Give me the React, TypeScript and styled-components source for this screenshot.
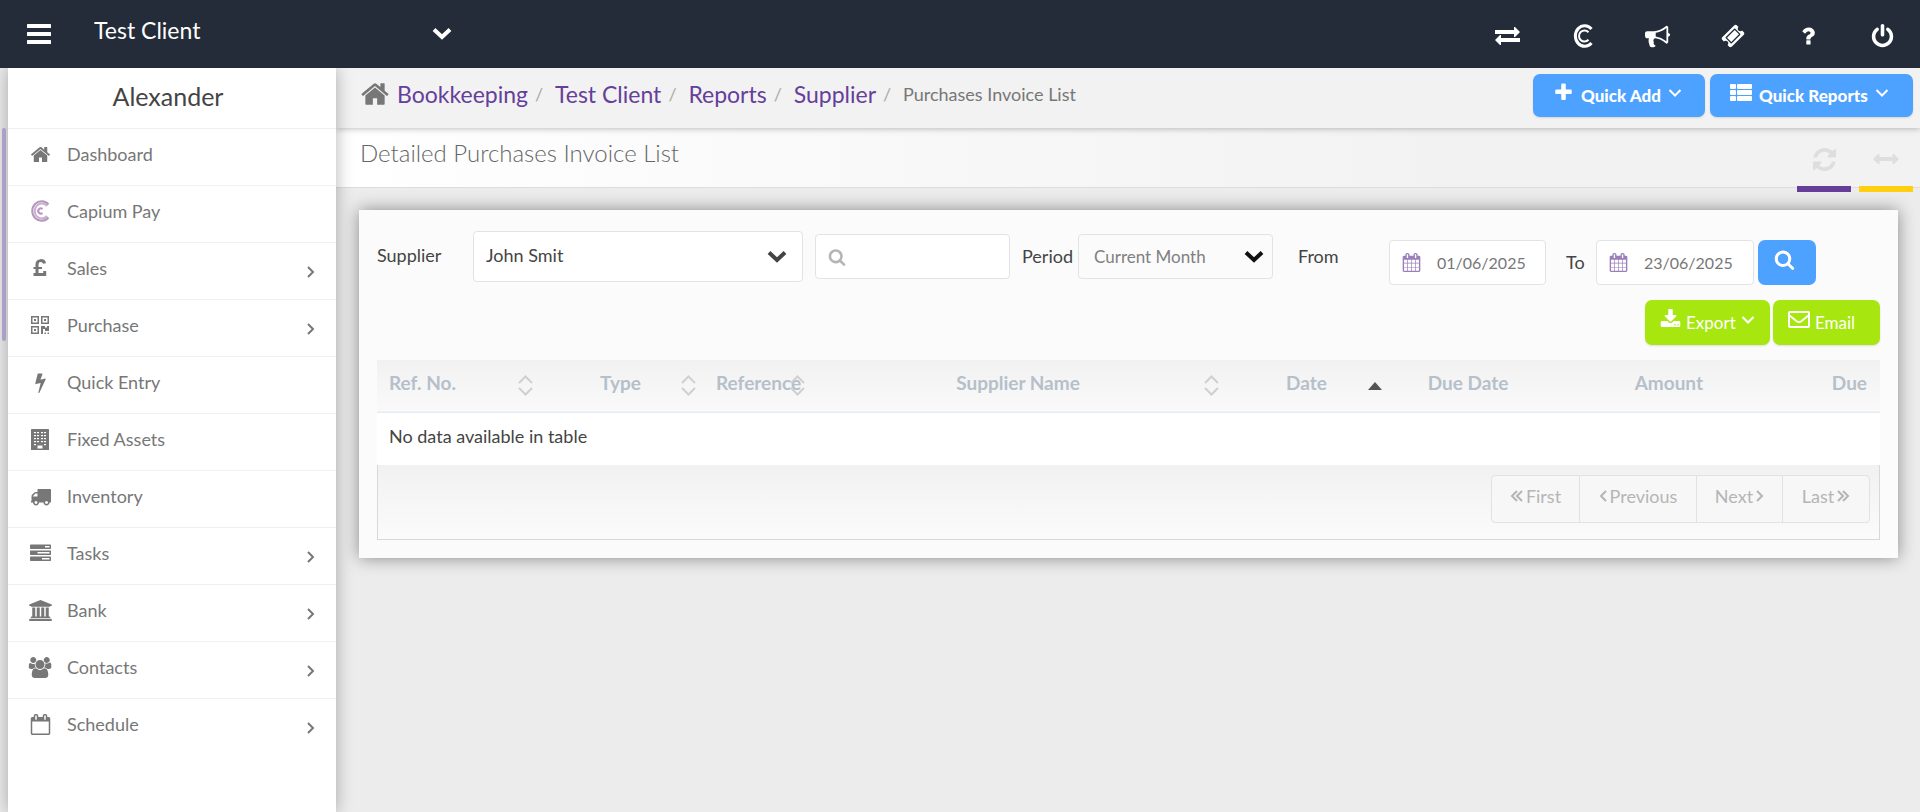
import React from "react";
import styled, { createGlobalStyle } from "styled-components";

const GlobalStyle = createGlobalStyle`
  *, *::before, *::after { box-sizing: border-box; }
  body {
    margin: 0;
    background: #ececec;
    color: #444;
    font-family: Lato, "Open Sans", sans-serif;
    font-size: 18px;
    line-height: 24px;
  }
  button, input, select { font: inherit; color: inherit; margin: 0; }
  button { border: 0; background: none; padding: 0; cursor: pointer; }
  a { text-decoration: none; color: inherit; }
  svg { display: block; flex: none; }
`;

/* ---------- icons ---------- */

const paths = {
  search:
    "M1216 832q0-185-131.5-316.5t-316.5-131.5-316.5 131.5-131.5 316.5 131.5 316.5 316.5 131.5 316.5-131.5 131.5-316.5zm512 832q0 52-38 90t-90 38q-54 0-90-38l-343-342q-179 124-399 124-143 0-273.5-55.5t-225-150-150-225-55.5-273.5 55.5-273.5 150-225 225-150 273.5-55.5 273.5 55.5 225 150 150 225 55.5 273.5q0 220-124 399l343 343q37 37 37 90z",
  home:
    "M1472 992v480q0 26-19 45t-45 19h-384v-384h-256v384h-384q-26 0-45-19t-19-45v-480q0-1 .5-3t.5-3l575-474 575 474q1 2 1 6zm223-69l-62 74q-8 9-21 11h-3q-13 0-21-7l-692-577-692 577q-12 8-24 7-13-2-21-11l-62-74q-8-10-7-23.5t11-21.5l719-599q32-26 76-26t76 26l244 204v-195q0-14 9-23t23-9h192q14 0 23 9t9 23v408l219 182q10 8 11 21.5t-7 23.5z",
  power:
    "M1664 896q0 156-61 298t-164 245-245 164-298 61-298-61-245-164-164-245-61-298q0-182 80.5-343t226.5-270q43-32 95.5-25t83.5 50q32 42 24.5 94.5t-49.5 84.5q-98 74-151.5 181t-53.5 228q0 104 40.5 198.5t109.5 163.5 163.5 109.5 198.5 40.5 198.5-40.5 163.5-109.5 109.5-163.5 40.5-198.5q0-121-53.5-228t-151.5-181q-42-32-49.5-84.5t24.5-94.5q31-43 84-50t95 25q146 109 226.5 270t80.5 343zm-640-768v640q0 52-38 90t-90 38-90-38-38-90v-640q0-52 38-90t90-38 90 38 38 90z",
  download:
    "M1344 1344q0-26-19-45t-45-19-45 19-19 45 19 45 45 19 45-19 19-45zm256 0q0-26-19-45t-45-19-45 19-19 45 19 45 45 19 45-19 19-45zm128-224v320q0 40-28 68t-68 28h-1472q-40 0-68-28t-28-68v-320q0-40 28-68t68-28h465l135 136q58 56 136 56t136-56l136-136h464q40 0 68 28t28 68zm-325-569q17 41-14 70l-448 448q-18 19-45 19t-45-19l-448-448q-31-29-14-70 17-39 59-39h256v-448q0-26 19-45t45-19h256q26 0 45 19t19 45v448h256q42 0 59 39z",
  plus:
    "M1600 736v192q0 40-28 68t-68 28h-416v416q0 40-28 68t-68 28h-192q-40 0-68-28t-28-68v-416h-416q-40 0-68-28t-28-68v-192q0-40 28-68t68-28h416v-416q0-40 28-68t68-28h192q40 0 68 28t28 68v416h416q40 0 68 28t28 68z",
  refresh:
    "M1639 1056q0 5-1 7-64 268-268 434.5t-478 166.5q-146 0-282.5-55t-243.5-157l-129 129q-19 19-45 19t-45-19-19-45v-448q0-26 19-45t45-19h448q26 0 45 19t19 45-19 45l-137 137q71 66 161 102t187 36q134 0 250-65t186-179q11-17 53-117 8-23 30-23h192q13 0 22.5 9.5t9.5 22.5zm25-800v448q0 26-19 45t-45 19h-448q-26 0-45-19t-19-45 19-45l138-138q-148-137-349-137-134 0-250 65t-186 179q-11 17-53 117-8 23-30 23h-199q-13 0-22.5-9.5t-9.5-22.5v-7q65-268 270-434.5t480-166.5q146 0 284 55.5t245 156.5l130-129q19-19 45-19t45 19 19 45z",
  ticket:
    "M1024 452l316 316-572 572-316-316zm-211 979l618-618q19-19 19-45t-19-45l-362-362q-18-18-45-18t-45 18l-618 618q-19 19-19 45t19 45l362 362q18 18 45 18t45-18zm889-637l-907 908q-37 37-90.5 37t-90.5-37l-126-126q56-56 56-136t-56-136-136-56-136 56l-125-126q-37-37-37-90.5t37-90.5l907-906q37-37 90.5-37t90.5 37l125 125q-56 56-56 136t56 136 136 56 136-56l126 125q37 37 37 90.5t-37 90.5z",
  bullhorn:
    "M1664 640q53 0 90.5 37.5t37.5 90.5-37.5 90.5-90.5 37.5v384q0 52-38 90t-90 38q-417-347-812-380-58 19-91 66t-31 100.5 40 92.5q-20 33-23 65.5t6 58 33.5 55 48 50 61.5 50.5q-29 58-111.5 83t-168.5 11.5-132-55.5q-7-23-29.5-87.5t-32-94.5-23-89-15-101 3.5-98.5 22-110.5h-122q-66 0-113-47t-47-113v-192q0-66 47-113t113-47h480q435 0 896-384 52 0 90 38t38 90v384zm-128 604v-954q-394 302-768 343v270q377 42 768 341z",
  question:
    "M1088 1256v240q0 16-12 28t-28 12h-240q-16 0-28-12t-12-28v-240q0-16 12-28t28-12h240q16 0 28 12t12 28zm316-600q0 54-15.5 101t-35 76.5-55 59.5-57.5 43.5-61 35.5q-41 23-68.5 65t-27.5 67q0 17-12 32.5t-28 15.5h-240q-15 0-25.5-18.5t-10.5-37.5v-45q0-83 65-156.5t143-108.5q59-27 84-56t25-76q0-42-46.5-74t-107.5-32q-65 0-108 29-35 25-107 115-13 16-31 16-12 0-25-8l-164-125q-13-10-15.5-25t5.5-28q160-266 464-266 80 0 161 31t146 83 106 127.5 41 158.5z",
  bolt:
    "M1333 566q18 20 7 44l-540 1157q-13 25-42 25-4 0-14-2-17-5-25.5-19t-4.5-30l197-808-406 101q-4 1-12 1-18 0-31-11-18-15-13-39l201-825q4-14 16-23t28-9h328q19 0 32 12.5t13 29.5q0 8-5 18l-171 463 396-98q8-2 12-2 19 0 34 15z",
  calendar:
    "M192 1664h288v-288h-288v288zm352 0h320v-288h-320v288zm-352-352h288v-320h-288v320zm352 0h320v-320h-320v320zm-352-384h288v-288h-288v288zm736 736h320v-288h-320v288zm-384-736h320v-288h-320v288zm768 736h288v-288h-288v288zm-384-352h320v-320h-320v320zm-352-864v-288q0-13-9.5-22.5t-22.5-9.5h-64q-13 0-22.5 9.5t-9.5 22.5v288q0 13 9.5 22.5t22.5 9.5h64q13 0 22.5-9.5t9.5-22.5zm736 864h288v-320h-288v320zm-384-384h320v-288h-320v288zm384 0h288v-288h-288v288zm32-480v-288q0-13-9.5-22.5t-22.5-9.5h-64q-13 0-22.5 9.5t-9.5 22.5v288q0 13 9.5 22.5t22.5 9.5h64q13 0 22.5-9.5t9.5-22.5zm384-64v1280q0 52-38 90t-90 38h-1408q-52 0-90-38t-38-90v-1280q0-52 38-90t90-38h128v-96q0-66 47-113t113-47h64q66 0 113 47t47 113v96h384v-96q0-66 47-113t113-47h64q66 0 113 47t47 113v96h128q52 0 90 38t38 90z",
  calendarEmpty:
    "M192 1664h1408v-1024h-1408v1024zm384-1216v-288q0-14-9-23t-23-9h-64q-14 0-23 9t-9 23v288q0 14 9 23t23 9h64q14 0 23-9t9-23zm768 0v-288q0-14-9-23t-23-9h-64q-14 0-23 9t-9 23v288q0 14 9 23t23 9h64q14 0 23-9t9-23zm384-64v1280q0 52-38 90t-90 38h-1408q-52 0-90-38t-38-90v-1280q0-52 38-90t90-38h128v-96q0-66 47-113t113-47h64q66 0 113 47t47 113v96h384v-96q0-66 47-113t113-47h64q66 0 113 47t47 113v96h128q52 0 90 38t38 90z",
  truck:
    "M640 1408q0-52-38-90t-90-38-90 38-38 90 38 90 90 38 90-38 38-90zm-384-512h384v-256h-158q-13 0-22 9l-195 195q-9 9-9 22v30zm1280 512q0-52-38-90t-90-38-90 38-38 90 38 90 90 38 90-38 38-90zm256-1088v1024q0 15-4 26.5t-13.5 18.5-16.5 11.5-23.5 6-22.5 2-25.5 0-22.5-.5q0 106-75 181t-181 75-181-75-75-181h-384q0 106-75 181t-181 75-181-75-75-181h-64q-3 0-22.5.5t-25.5 0-22.5-2-23.5-6-16.5-11.5-13.5-18.5-4-26.5q0-26 19-45t45-19v-320q0-8-.5-35t0-38 2.5-34.5 6.5-37 14-30.5 22.5-30l198-198q19-19 50.5-32t58.5-13h160v-192q0-26 19-45t45-19h1024q26 0 45 19t19 45z",
  tasks:
    "M1024 1408h640v-128h-640v128zm-384-512h1024v-128h-1024v128zm640-512h384v-128h-384v128zm512 832v256q0 26-19 45t-45 19h-1664q-26 0-45-19t-19-45v-256q0-26 19-45t45-19h1664q26 0 45 19t19 45zm0-512v256q0 26-19 45t-45 19h-1664q-26 0-45-19t-19-45v-256q0-26 19-45t45-19h1664q26 0 45 19t19 45zm0-512v256q0 26-19 45t-45 19h-1664q-26 0-45-19t-19-45v-256q0-26 19-45t45-19h1664q26 0 45 19t19 45z",
  bank:
    "M960 0l960 384v128h-128q0 26-20.5 45t-48.5 19h-1526q-28 0-48.5-19t-20.5-45h-128v-128zm-704 640h256v768h128v-768h256v768h128v-768h256v768h128v-768h256v768h59q28 0 48.5 19t20.5 45v64h-1664v-64q0-26 20.5-45t48.5-19h59v-768zm1595 960q28 0 48.5 19t20.5 45v128h-1920v-128q0-26 20.5-45t48.5-19h1782z",
  users:
    "M657 896q-162 5-265 128h-134q-82 0-138-40.5t-56-118.5q0-353 124-353 6 0 43.5 21t97.5 42.5 119 21.5q67 0 133-23-5 37-5 66 0 159 93 294zm1071 637q0 120-73 189.5t-194 69.5h-874q-121 0-194-69.5t-73-189.5q0-53 3.5-103.5t14-109 26.5-108.5 43-97.5 62-81 85.5-53.5 111.5-20q10 0 43 21.5t73 48 107 48 135 21.5 135-21.5 107-48 73-48 43-21.5q61 0 111.5 20t85.5 53.5 62 81 43 97.5 26.5 108.5 14 109 3.5 103.5zm-1024-1277q0 106-75 181t-181 75-181-75-75-181 75-181 181-75 181 75 75 181zm704 384q0 159-112.5 271.5t-271.5 112.5-271.5-112.5-112.5-271.5 112.5-271.5 271.5-112.5 271.5 112.5 112.5 271.5zm576 225q0 78-56 118.5t-138 40.5h-134q-103-123-265-128 93-135 93-294 0-29-5-66 66 23 133 23 59 0 119-21.5t97.5-42.5 43.5-21q124 0 124 353zm-128-609q0 106-75 181t-181 75-181-75-75-181 75-181 181-75 181 75 75 181z",
};

type GlyphName = keyof typeof paths;

const Glyph = ({ name, size, wide = 1792 }: { name: GlyphName; size: number; wide?: number }) => (
  <svg
    width={Math.round((size * wide) / 1792)}
    height={size}
    viewBox={`0 0 ${wide} 1792`}
    fill="currentColor"
    aria-hidden="true"
  >
    <path d={paths[name]} />
  </svg>
);

const BarsIcon = () => (
  <svg width="24" height="20" viewBox="0 0 24 20" fill="currentColor" aria-hidden="true">
    <rect width="24" height="4" rx="0.5" />
    <rect y="8" width="24" height="4" rx="0.5" />
    <rect y="16" width="24" height="4" rx="0.5" />
  </svg>
);

const ThickChevron = ({ color }: { color: string }) => (
  <svg width="20" height="14" viewBox="0 0 20 14" fill="none" stroke={color} strokeWidth="4" aria-hidden="true">
    <path d="M2 2.500l8 7.500 8-7.500" />
  </svg>
);

const ThinChevron = ({ way }: { way: "down" | "right" | "left" }) =>
  way === "down" ? (
    <svg width="14" height="8" viewBox="0 0 14 8" fill="none" stroke="currentColor" strokeWidth="2" aria-hidden="true">
      <path d="M1.500 1l5.500 5.500L12.500 1" />
    </svg>
  ) : (
    <svg width="8" height="12" viewBox="0 0 8 12" fill="none" stroke="currentColor" strokeWidth="2" aria-hidden="true">
      <path d={way === "right" ? "M1 1l5 5-5 5" : "M7 1L2 6l5 5"} />
    </svg>
  );

const DoubleChevron = ({ way }: { way: "right" | "left" }) => (
  <svg width="13" height="12" viewBox="0 0 13 12" fill="none" stroke="currentColor" strokeWidth="2" aria-hidden="true">
    <path d={way === "right" ? "M1 1l5 5-5 5M6 1l5 5-5 5" : "M7 1L2 6l5 5M12 1L7 6l5 5"} />
  </svg>
);

const ExchangeIcon = () => (
  <svg width="25" height="18" viewBox="0 0 25 18" fill="currentColor" aria-hidden="true">
    <path d="M0 3h19V0h1l5 5-5 5h-1V7H0zM25 15H6v3H5l-5-5 5-5h1v3h19z" />
  </svg>
);

const ArrowsIcon = () => (
  <svg width="26" height="10" viewBox="0 0 26 10" fill="currentColor" aria-hidden="true">
    <path d="M0 5l5-5h1.500v3h13V0H21l5 5-5 5h-1.500V7h-13v3H5z" />
  </svg>
);

const CapiumIcon = () => (
  <svg width="22" height="24" viewBox="0 0 22 24" fill="none" stroke="currentColor" aria-hidden="true">
    <path d="M19.500 5A9.300 10.300 0 1 0 19.500 19" strokeWidth="3" />
    <path d="M16.500 8.200A5.500 5.500 0 1 0 16.500 15.800" strokeWidth="2" />
  </svg>
);

const CapiumPayIcon = () => (
  <svg width="20" height="22" viewBox="0 0 20 22" fill="none" stroke="#b795c0" aria-hidden="true">
    <path d="M18.500 4.500A9.300 9.800 0 1 0 18.500 17.500" strokeWidth="2" />
    <path d="M17 6A7 7.500 0 1 0 17 16" strokeWidth="2" opacity="0.750" />
    <path d="M12.500 9A2.600 2.600 0 1 0 12.500 13" strokeWidth="2" />
  </svg>
);

const PoundIcon = () => (
  <svg width="14" height="18" viewBox="0 0 14 18" fill="none" stroke="currentColor" aria-hidden="true">
    <path d="M11.500 4.500C11 .8 4 .2 4 5.500V15.500" strokeWidth="3" />
    <path d="M0.500 9H9" strokeWidth="2" />
    <path d="M0.500 15.500H11.700V12" strokeWidth="3" />
  </svg>
);

const QrIcon = () => (
  <svg width="18" height="18" viewBox="0 0 18 18" fill="currentColor" aria-hidden="true">
    <path
      fillRule="evenodd"
      d="M0 0h8v8H0zM1.500 1.500v5h5v-5zM10 0h8v8h-8zM11.500 1.500v5h5v-5zM0 10h8v8H0zM1.500 11.500v5h5v-5z"
    />
    <path d="M3 3h2v2H3zM13 3h2v2h-2zM3 13h2v2H3zM10 10h4v1.500h2V10h2v5h-4v-2h-2v5h-2zM13.500 16.500h1.500V18h-1.500zM16.500 16.500H18V18h-1.500z" />
  </svg>
);

const BuildingIcon = () => (
  <svg width="18" height="21" viewBox="0 0 18 21" aria-hidden="true">
    <rect width="18" height="21" rx="0.500" fill="currentColor" />
    {[3, 6, 9, 12].map((y) =>
      [3, 6, 10, 13].map((x) => <rect key={`${x}-${y}`} x={x} y={y} width="2" height="1.200" fill="#fff" />)
    )}
    {[3, 13].map((x) => (
      <rect key={x} x={x} y="15" width="2" height="1.200" fill="#fff" />
    ))}
    <rect x="6.500" y="16.500" width="5" height="3" fill="#fff" />
  </svg>
);

const ListIcon = () => (
  <svg width="22" height="17" viewBox="0 0 22 17" fill="currentColor" aria-hidden="true">
    {[0, 6, 12].map((y) => (
      <g key={y}>
        <rect y={y} width="6" height="5" rx="1" />
        <rect x="7" y={y} width="15" height="5" rx="1" />
      </g>
    ))}
  </svg>
);

const EnvelopeIcon = () => (
  <svg width="22" height="17" viewBox="0 0 22 17" fill="none" stroke="currentColor" strokeWidth="2" aria-hidden="true">
    <rect x="1" y="1" width="20" height="15" rx="1" />
    <path d="M1.500 4.500l7.500 6q2 1.300 4 0l7.500-6" />
  </svg>
);

const SortIcon = () => (
  <svg width="15" height="21" viewBox="0 0 15 21" fill="none" stroke="#d0d0d0" strokeWidth="2" aria-hidden="true">
    <path d="M1 8l6.500-6.500L14 8M1 13l6.500 6.500L14 13" />
  </svg>
);

const SortedIcon = () => (
  <svg width="14" height="8" viewBox="0 0 14 8" fill="#555" aria-hidden="true">
    <path d="M0 8l7-8 7 8z" />
  </svg>
);

/* ---------- top bar ---------- */

const TopBar = styled.header`
  position: relative;
  z-index: 2;
  display: flex;
  align-items: center;
  height: 68px;
  padding-left: 27px;
  background: #232c38;
  color: #fff;
`;

const MenuButton = styled.button`
  width: 24px;
`;

const ClientPicker = styled.div`
  position: relative;
  width: 380px;
  height: 52px;
  margin: 0 auto 8px 43px;
  select {
    width: 100%;
    height: 100%;
    padding: 0;
    border: 0;
    appearance: none;
    background: #232c38;
    font-size: 23px;
  }
  svg {
    position: absolute;
    top: 23px;
    right: 22px;
    pointer-events: none;
  }
`;

const TopAction = styled.button`
  display: flex;
  align-items: center;
  justify-content: center;
  width: 75px;
  height: 68px;
  padding-top: 4px;
`;

/* ---------- side menu ---------- */

const Shell = styled.div`
  display: flex;
  min-height: calc(100vh - 68px);
`;

const ScrollRail = styled.div`
  width: 8px;
  padding: 60px 2px 0;
  background: #ebebeb;
`;

const ScrollThumb = styled.div`
  position: relative;
  z-index: 2;
  height: 213px;
  border-radius: 2px;
  background: #ad9fc6;
`;

const SideMenu = styled.nav`
  position: relative;
  z-index: 1;
  width: 328px;
  flex: none;
  background: #fff;
  box-shadow: 0 0 16px rgba(0, 0, 0, 0.3);
`;

const UserName = styled.div`
  height: 60px;
  padding-right: 8px;
  line-height: 56px;
  font-size: 25px;
  text-align: center;
`;

const MenuList = styled.ul`
  margin: 0;
  padding: 0;
  list-style: none;
`;

const MenuLink = styled.a`
  display: flex;
  align-items: center;
  height: 57px;
  padding: 2px 21px 0 12px;
  border-top: 1px solid #f0f0f0;
  color: #777;
`;

const MenuIcon = styled.span`
  display: flex;
  justify-content: center;
  width: 40px;
  margin-right: 7px;
  padding-bottom: 8px;
`;

const MenuLabel = styled.span`
  flex: 1;
  padding-bottom: 8px;
`;

/* ---------- page heads ---------- */

const Main = styled.main`
  flex: 1;
  min-width: 0;
`;

const CrumbBar = styled.div`
  position: relative;
  display: flex;
  justify-content: space-between;
  height: 60px;
  padding: 6px 7px 0 24px;
  background: #f2f2f2;
  box-shadow: 0 1px 6px rgba(0, 0, 0, 0.25);
`;

const Crumbs = styled.ol`
  display: flex;
  align-items: center;
  height: 40px;
  margin: 0;
  padding: 0;
  list-style: none;
  color: #777;
  li { display: flex; align-items: center; }
  li + li::before {
    content: "/";
    width: 27px;
    padding-left: 7px;
    color: #aaa;
  }
`;

const CrumbLink = styled.a`
  font-size: 23px;
  color: #663e9b;
`;

const HomeMark = styled.span`
  margin-right: 7px;
  color: #777;
`;

const QuickActions = styled.div`
  display: flex;
  gap: 5px;
`;

const SolidButton = styled.button<{ $tone: "blue" | "green"; $width: number }>`
  display: flex;
  align-items: center;
  width: ${(p) => p.$width}px;
  height: ${(p) => (p.$tone === "blue" ? 43 : 45)}px;
  padding: 0 ${(p) => (p.$tone === "blue" ? 20 : 15)}px;
  gap: ${(p) => (p.$tone === "blue" ? 7 : 5)}px;
  border-radius: 7px;
  background: ${(p) => (p.$tone === "blue" ? "#4da1ff" : "#a7e70f")};
  box-shadow: 0 1px 2px rgba(0, 0, 0, 0.12);
  color: #fff;
  font-size: 17px;
  font-weight: ${(p) => (p.$tone === "blue" ? 900 : 400)};
  white-space: nowrap;
  svg { margin-bottom: 6px; }
`;

const TitleBar = styled.div`
  display: flex;
  justify-content: space-between;
  height: 60px;
  padding: 0 7px 0 24px;
  border-bottom: 1px solid #ddd;
  background: linear-gradient(90deg, #fff, #f2f2f2 70%);
`;

const PageTitle = styled.h1`
  margin: 0;
  font-size: 24px;
  font-weight: 300;
  line-height: 50px;
  color: #666;
`;

const PageTools = styled.div`
  display: flex;
  gap: 8px;
`;

const ToolButton = styled.button<{ $color: string }>`
  display: flex;
  align-items: center;
  justify-content: center;
  width: 54px;
  height: 64px;
  border-bottom: 6px solid ${(p) => p.$color};
  padding-bottom: 4px;
  padding-top: 8px;
  color: #dedede;
  margin-bottom: -6px;
`;

/* ---------- report card ---------- */

const Card = styled.section`
  margin: 22px 22px 24px 23px;
  padding: 21px 18px 18px;
  background: #fbfbfb;
  box-shadow: 0 0 16px rgba(0, 0, 0, 0.42);
`;

const Filters = styled.form`
  display: flex;
  align-items: flex-start;
  height: 54px;
`;

const Label = styled.label<{ $width: number; $drop: number }>`
  flex: none;
  width: ${(p) => p.$width}px;
  margin-top: ${(p) => p.$drop}px;
  line-height: ${(p) => (p.$drop ? 45 : 48)}px;
`;

const Field = styled.div<{ $width: number; $drop: number; $after: number }>`
  position: relative;
  flex: none;
  width: ${(p) => p.$width}px;
  height: ${(p) => (p.$drop ? 45 : 51)}px;
  margin-top: ${(p) => p.$drop}px;
  margin-right: ${(p) => p.$after}px;
`;

const FieldIcon = styled.span<{ $side: "left" | "right"; $inset?: number; $color?: string }>`
  position: absolute;
  top: 0;
  bottom: 0;
  ${(p) => p.$side}: ${(p) => p.$inset ?? 13}px;
  display: flex;
  align-items: center;
  color: ${(p) => p.$color ?? "inherit"};
  pointer-events: none;
`;

const control = `
  width: 100%;
  height: 100%;
  border: 1px solid #e3e3e3;
  border-radius: 4px;
  appearance: none;
  outline: 0;
`;

const Select = styled.select<{ $quiet?: boolean }>`
  ${control}
  padding: 0 40px ${(p) => (p.$quiet ? 0 : 4)}px ${(p) => (p.$quiet ? 15 : 12)}px;
  background: ${(p) => (p.$quiet ? "#fbfbfb" : "#fff")};
  color: ${(p) => (p.$quiet ? "#808080" : "#444")};
  font-size: ${(p) => (p.$quiet ? 17 : 18)}px;
`;

const Input = styled.input`
  ${control}
  padding: 0 8px 0 47px;
  background: #fff;
  color: #777;
  font-size: 16px;
`;

const SearchButton = styled.button`
  display: flex;
  align-items: center;
  justify-content: center;
  flex: none;
  width: 58px;
  height: 45px;
  margin-top: 9px;
  padding: 0 6px 6px 0;
  border-radius: 7px;
  background: #4da1ff;
  color: #fff;
`;

const Exports = styled.div`
  display: flex;
  justify-content: flex-end;
  gap: 3px;
  margin: 15px 0;
`;

const Table = styled.table`
  width: 100%;
  border-collapse: collapse;
  table-layout: fixed;
`;

const HeadCell = styled.th<{ $align: "left" | "center" | "right" }>`
  position: relative;
  height: 52px;
  padding: 0 ${(p) => (p.$align === "center" ? 18 : 13)}px 6px ${(p) => (p.$align === "center" ? 10 : 12)}px;
  text-align: ${(p) => p.$align};
  font-size: 19px;
  font-weight: 700;
  white-space: nowrap;
`;

const HeadRow = styled.tr`
  height: 52px;
  border-bottom: 1px solid #e4ecf5;
  background: linear-gradient(#f1f1f1, #fafafa);
  color: #b5c0ca;
`;

const SortMark = styled.span`
  position: absolute;
  top: 0;
  bottom: 0;
  right: 10px;
  display: flex;
  align-items: center;
`;

const EmptyCell = styled.td`
  height: 53px;
  padding: 0 12px 6px;
  background: #fff;
`;

const TableFoot = styled.div`
  display: flex;
  justify-content: flex-end;
  height: 75px;
  padding: 10px 9px 0;
  border: 1px solid #d8d8d8;
  border-top: 0;
  background: linear-gradient(#f1f1f1, #fbfbfb);
`;

const Pager = styled.div`
  display: flex;
  height: 48px;
  border: 1px solid #e2e2e2;
  border-radius: 4px;
  background: #f7f7f7;
`;

const PageButton = styled.button<{ $width: number }>`
  display: flex;
  align-items: center;
  justify-content: center;
  gap: 3px;
  width: ${(p) => p.$width}px;
  padding-bottom: 6px;
  color: #b5b5b5;
  & + & { border-left: 1px solid #e2e2e2; }
`;

/* ---------- data ---------- */

const menu: { label: string; icon: React.ReactNode; nested?: boolean }[] = [
  { label: "Dashboard", icon: <Glyph name="home" size={21} /> },
  { label: "Capium Pay", icon: <CapiumPayIcon /> },
  { label: "Sales", icon: <PoundIcon />, nested: true },
  { label: "Purchase", icon: <QrIcon />, nested: true },
  { label: "Quick Entry", icon: <Glyph name="bolt" size={21} /> },
  { label: "Fixed Assets", icon: <BuildingIcon /> },
  { label: "Inventory", icon: <Glyph name="truck" size={21} /> },
  { label: "Tasks", icon: <Glyph name="tasks" size={21} />, nested: true },
  { label: "Bank", icon: <Glyph name="bank" size={21} wide={1920} />, nested: true },
  { label: "Contacts", icon: <Glyph name="users" size={21} wide={2048} />, nested: true },
  { label: "Schedule", icon: <Glyph name="calendarEmpty" size={21} />, nested: true },
];

const topActions = [
  { label: "Switch", icon: <ExchangeIcon /> },
  { label: "Capium", icon: <CapiumIcon /> },
  { label: "News", icon: <Glyph name="bullhorn" size={25} /> },
  { label: "Tickets", icon: <Glyph name="ticket" size={24} /> },
  { label: "Help", icon: <Glyph name="question" size={24} /> },
  { label: "Log out", icon: <Glyph name="power" size={25} /> },
];

const columns: {
  label: string;
  width?: number;
  align: "left" | "center" | "right";
  sort?: "both" | "up";
}[] = [
  { label: "Ref. No.", width: 166, align: "left", sort: "both" },
  { label: "Type", width: 163, align: "center", sort: "both" },
  { label: "Reference", width: 109, align: "center", sort: "both" },
  { label: "Supplier Name", align: "center", sort: "both" },
  { label: "Date", width: 163, align: "center", sort: "up" },
  { label: "Due Date", width: 160, align: "center" },
  { label: "Amount", width: 164, align: "right" },
  { label: "Due", width: 164, align: "right" },
];

export default function App() {
  return (
    <>
      <GlobalStyle />
      <TopBar>
        <MenuButton aria-label="Menu">
          <BarsIcon />
        </MenuButton>
        <ClientPicker>
          <select aria-label="Client">
            <option>Test Client</option>
          </select>
          <ThickChevron color="#fff" />
        </ClientPicker>
        {topActions.map((a) => (
          <TopAction key={a.label} aria-label={a.label}>
            {a.icon}
          </TopAction>
        ))}
      </TopBar>
      <Shell>
        <ScrollRail>
          <ScrollThumb />
        </ScrollRail>
        <SideMenu>
          <UserName>Alexander</UserName>
          <MenuList>
            {menu.map((m) => (
              <li key={m.label}>
                <MenuLink href="#">
                  <MenuIcon>{m.icon}</MenuIcon>
                  <MenuLabel>{m.label}</MenuLabel>
                  {m.nested && <ThinChevron way="right" />}
                </MenuLink>
              </li>
            ))}
          </MenuList>
        </SideMenu>
        <Main>
          <CrumbBar>
            <Crumbs>
              <li>
                <HomeMark>
                  <Glyph name="home" size={30} />
                </HomeMark>
                <CrumbLink href="#">Bookkeeping</CrumbLink>
              </li>
              {["Test Client", "Reports", "Supplier"].map((c) => (
                <li key={c}>
                  <CrumbLink href="#">{c}</CrumbLink>
                </li>
              ))}
              <li>Purchases Invoice List</li>
            </Crumbs>
            <QuickActions>
              <SolidButton $tone="blue" $width={172}>
                <Glyph name="plus" size={21} />
                Quick Add
                <ThinChevron way="down" />
              </SolidButton>
              <SolidButton $tone="blue" $width={203}>
                <ListIcon />
                Quick Reports
                <ThinChevron way="down" />
              </SolidButton>
            </QuickActions>
          </CrumbBar>
          <TitleBar>
            <PageTitle>Detailed Purchases Invoice List</PageTitle>
            <PageTools>
              <ToolButton $color="#663e97" aria-label="Refresh">
                <Glyph name="refresh" size={27} />
              </ToolButton>
              <ToolButton $color="#ffcf10" aria-label="Full width">
                <ArrowsIcon />
              </ToolButton>
            </PageTools>
          </TitleBar>
          <Card>
            <Filters>
              <Label htmlFor="supplier" $width={96} $drop={0}>
                Supplier
              </Label>
              <Field $width={330} $drop={0} $after={12}>
                <Select id="supplier">
                  <option>John Smit</option>
                </Select>
                <FieldIcon $side="right" $inset={16}>
                  <ThickChevron color="#444" />
                </FieldIcon>
              </Field>
              <Field $width={195} $drop={3} $after={12}>
                <Input type="text" aria-label="Search" />
                <FieldIcon $side="left" $color="#b5b5b5">
                  <Glyph name="search" size={18} />
                </FieldIcon>
              </Field>
              <Label htmlFor="period" $width={56} $drop={3}>
                Period
              </Label>
              <Field $width={195} $drop={3} $after={25}>
                <Select id="period" $quiet>
                  <option>Current Month</option>
                </Select>
                <FieldIcon $side="right" $inset={9}>
                  <ThickChevron color="#111" />
                </FieldIcon>
              </Field>
              <Label htmlFor="from" $width={91} $drop={3}>
                From
              </Label>
              <Field $width={157} $drop={9} $after={20}>
                <Input id="from" type="text" defaultValue="01/06/2025" />
                <FieldIcon $side="left" $color="#9a7fba">
                  <Glyph name="calendar" size={19} />
                </FieldIcon>
              </Field>
              <Label htmlFor="to" $width={30} $drop={9}>
                To
              </Label>
              <Field $width={158} $drop={9} $after={4}>
                <Input id="to" type="text" defaultValue="23/06/2025" />
                <FieldIcon $side="left" $color="#9a7fba">
                  <Glyph name="calendar" size={19} />
                </FieldIcon>
              </Field>
              <SearchButton type="button" aria-label="Search">
                <Glyph name="search" size={21} />
              </SearchButton>
            </Filters>
            <Exports>
              <SolidButton $tone="green" $width={125}>
                <Glyph name="download" size={21} />
                Export
                <ThinChevron way="down" />
              </SolidButton>
              <SolidButton $tone="green" $width={107}>
                <EnvelopeIcon />
                Email
              </SolidButton>
            </Exports>
            <Table>
              <colgroup>
                {columns.map((c) => (
                  <col key={c.label} width={c.width} />
                ))}
              </colgroup>
              <thead>
                <HeadRow>
                  {columns.map((c) => (
                    <HeadCell key={c.label} $align={c.align}>
                      {c.label}
                      {c.sort && <SortMark>{c.sort === "up" ? <SortedIcon /> : <SortIcon />}</SortMark>}
                    </HeadCell>
                  ))}
                </HeadRow>
              </thead>
              <tbody>
                <tr>
                  <EmptyCell colSpan={8}>No data available in table</EmptyCell>
                </tr>
              </tbody>
            </Table>
            <TableFoot>
              <Pager>
                <PageButton $width={87}>
                  <DoubleChevron way="left" />
                  First
                </PageButton>
                <PageButton $width={117}>
                  <ThinChevron way="left" />
                  Previous
                </PageButton>
                <PageButton $width={86}>
                  Next
                  <ThinChevron way="right" />
                </PageButton>
                <PageButton $width={87}>
                  Last
                  <DoubleChevron way="right" />
                </PageButton>
              </Pager>
            </TableFoot>
          </Card>
        </Main>
      </Shell>
    </>
  );
}
